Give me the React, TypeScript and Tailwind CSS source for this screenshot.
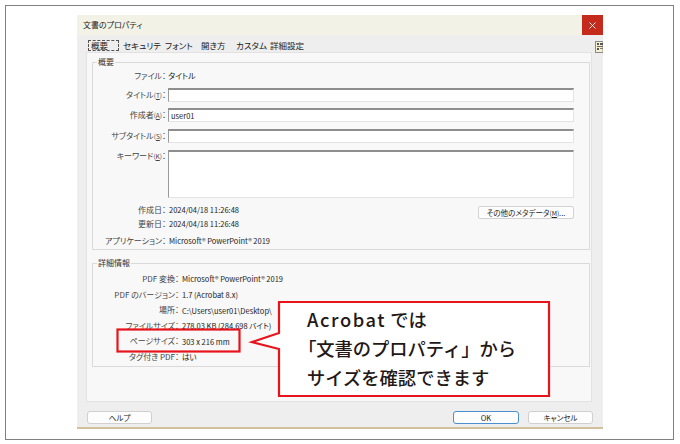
import React from "react";

function Field({ h = 14, children }: { h?: number; children?: React.ReactNode }) {
  return (
    <div
      className={`flex-1 mr-[15px] bg-white border-t-2 border-t-[#8e8e8e] border-l border-l-[#9a9a9a] border-r border-r-[#e4e4e4] border-b border-b-[#e4e4e4] pl-[2px] text-[7.5px] leading-[11px] ${h === 48 ? "h-[48px]" : "h-[14px]"}`}
    >
      {children}
    </div>
  );
}

function Key({ children }: { children: React.ReactNode }) {
  return <span className="text-[6.5px]">({children})</span>;
}

function Group1() {
  return (
    <div className="h-[188px] border border-[#dadada]">
      <div className="-mt-[7px] ml-[4px] w-fit px-[1px] bg-[#f8f8f8] h-[12px] leading-[12px] text-[#333]">概要</div>
      <div className="flex h-[12px] items-center mt-[2px]">
        <div className="w-[73px] text-right text-[#444]">ファイル：</div>
        <div className="ml-[2px]">タイトル</div>
      </div>
      <div className="flex h-[14px] items-center mt-[6px]">
        <div className="w-[73px] text-right text-[#444]">タイトル<Key><u>T</u></Key>：</div>
        <div className="ml-[2px] flex-1 flex"><Field /></div>
      </div>
      <div className="flex h-[14px] items-center mt-[6px]">
        <div className="w-[73px] text-right text-[#444]">作成者<Key><u>A</u></Key>：</div>
        <div className="ml-[2px] flex-1 flex"><Field>user01</Field></div>
      </div>
      <div className="flex h-[14px] items-center mt-[7px]">
        <div className="w-[73px] text-right text-[#444]">サブタイトル<Key><u>S</u></Key>：</div>
        <div className="ml-[2px] flex-1 flex"><Field /></div>
      </div>
      <div className="flex h-[48px] items-start mt-[7px]">
        <div className="w-[73px] text-right text-[#444] leading-[12px] pt-[0px]">キーワード<Key><u>K</u></Key>：</div>
        <div className="ml-[2px] flex-1 flex"><Field h={48} /></div>
      </div>
      <div className="flex h-[12px] items-center mt-[6px]">
        <div className="w-[73px] text-right text-[#444]">作成日：</div>
        <div className="ml-[3px] flex-1 text-[7.5px]">2024/04/18 11:26:48</div>
        <button className="mt-[5px] mr-[15px] w-[96px] h-[13px] bg-[#fdfdfd] border border-[#d2d2d2] rounded-[2px] text-[7.5px] leading-[11px] text-[#222]">
          その他のメタデータ<span className="text-[6.5px]">(<u>M</u>)</span>...
        </button>
      </div>
      <div className="flex h-[12px] items-center mt-[2px]">
        <div className="w-[73px] text-right text-[#444]">更新日：</div>
        <div className="ml-[3px] text-[7.5px]">2024/04/18 11:26:48</div>
      </div>
      <div className="flex h-[12px] items-center mt-[5px]">
        <div className="w-[73px] text-right text-[#444]">アプリケーション：</div>
        <div className="ml-[3px] text-[7.5px]">Microsoft® PowerPoint® 2019</div>
      </div>
    </div>
  );
}

const details: [string, string][] = [
  ["PDF 変換：", "Microsoft® PowerPoint® 2019"],
  ["PDF のバージョン：", "1.7 (Acrobat 8.x)"],
  ["場所：", "C:\\Users\\user01\\Desktop\\"],
  ["ファイルサイズ：", "278.03 KB (284,698 バイト)"],
  ["ページサイズ：", "303 x 216 mm"],
  ["タグ付き PDF：", "はい"],
];

function Group2() {
  return (
    <div className="mt-[13px] h-[104px] border border-[#dadada]">
      <div className="-mt-[7px] ml-[4px] w-fit px-[1px] bg-[#f8f8f8] h-[12px] leading-[12px] text-[#333]">詳細情報</div>
      <div className="mt-[4px] flex flex-col gap-[3.6px]">
        {details.map(([k, v]) => (
          <div key={k} className="flex h-[12px] items-center">
            <div className="w-[86px] text-right text-[#444]">{k}</div>
            <div className="ml-[3px] text-[7.5px]">{v}</div>
          </div>
        ))}
      </div>
    </div>
  );
}

function Dialog() {
  return (
    <div className="w-[526px] h-[414px] flex flex-col bg-[#eeeeee] border-b-2 border-[#d2bf9c] text-[8px] text-[#222] [font-feature-settings:'palt']">
      <div className="h-[20px] shrink-0 flex items-center bg-[#f2f2e6]">
        <span className="ml-[6px] flex-1 text-[#222]">文書のプロパティ</span>
        <div className="w-[21px] h-full bg-[#c42b1c] flex items-center justify-center">
          <svg width="7" height="7" viewBox="0 0 7 7">
            <path d="M0.5 0.5 L6.5 6.5 M6.5 0.5 L0.5 6.5" stroke="white" strokeWidth="0.9" />
          </svg>
        </div>
      </div>
      <div className="h-[17px] shrink-0 flex items-start pt-[5px] pl-[11px] text-[8.5px] leading-[11px] text-[#222]">
        <div className="w-[35px]">
          <span className="block w-[31px] h-[11px] border border-dashed border-[#555] pl-[2px] leading-[9px]">概要</span>
        </div>
        <div className="w-[42px]">セキュリティ</div>
        <div className="w-[36px]">フォント</div>
        <div className="w-[35px]">開き方</div>
        <div className="w-[34px]">カスタム</div>
        <div>詳細設定</div>
        <div className="ml-auto mt-[1px] w-[8px] h-[12px]">
          <svg width="8" height="12" viewBox="0 0 8 12">
            <rect x="0.5" y="0.5" width="7.5" height="11" fill="#f6f0cf" stroke="#8a8a8a" />
            <rect x="2" y="2" width="2" height="2" fill="#555" />
            <rect x="5" y="2" width="3" height="2" fill="#555" />
            <rect x="2" y="5" width="6" height="1" fill="#666" />
            <rect x="2" y="7" width="2" height="2" fill="#555" />
            <rect x="5" y="7" width="3" height="1" fill="#777" />
          </svg>
        </div>
      </div>
      <div className="ml-[9px] mr-[11px] h-[350px] shrink-0 bg-[#f8f8f8] border border-[#e2e2e2] pt-[9px] pl-[5px] pr-[1px]">
        <Group1 />
        <Group2 />
      </div>
      <div className="mt-[9px] h-[13px] flex px-[10px]">
        <button className="w-[65px] h-[13px] bg-[#fdfdfd] border border-[#d0d0d0] rounded-[3px] text-[7.5px] leading-[11px] text-[#222]">ヘルプ</button>
        <div className="flex-1" />
        <button className="w-[66px] h-[13px] bg-[#fdfdfd] border border-[#4a8fd0] rounded-[3px] text-[7.5px] leading-[11px] text-[#222]">OK</button>
        <button className="ml-[9px] w-[65px] h-[13px] bg-[#fdfdfd] border border-[#d0d0d0] rounded-[3px] text-[7.5px] leading-[11px] text-[#222]">キャンセル</button>
      </div>
    </div>
  );
}

export default function App() {
  return (
    <div className="relative w-[680px] h-[444px] bg-white p-[5px] font-['Noto_Sans_CJK_JP',sans-serif] overflow-hidden">
      <div className="w-[669px] h-[435px] border border-[#808080] pt-[9px] pl-[71px]">
        <Dialog />
      </div>
      <svg className="absolute left-0 top-0 pointer-events-none" width="680" height="444">
        <rect x="117.5" y="329.5" width="122" height="22" fill="none" stroke="#e8141c" strokeWidth="2.2" />
        <path d="M279 302 H549 V396 H279 V349 L252 342 L279 333 Z" fill="white" stroke="#e8141c" strokeWidth="2.2" />
      </svg>
      <div className="absolute left-[307px] top-[305px] text-[18.3px] leading-[29px] font-medium text-[#231815] whitespace-nowrap">
        <div><span className="tracking-[1.6px]">Acrobat</span> では</div>
        <div><span className="[font-feature-settings:'palt']">「</span>文書のプロパティ」から</div>
        <div>サイズを確認できます</div>
      </div>
    </div>
  );
}
